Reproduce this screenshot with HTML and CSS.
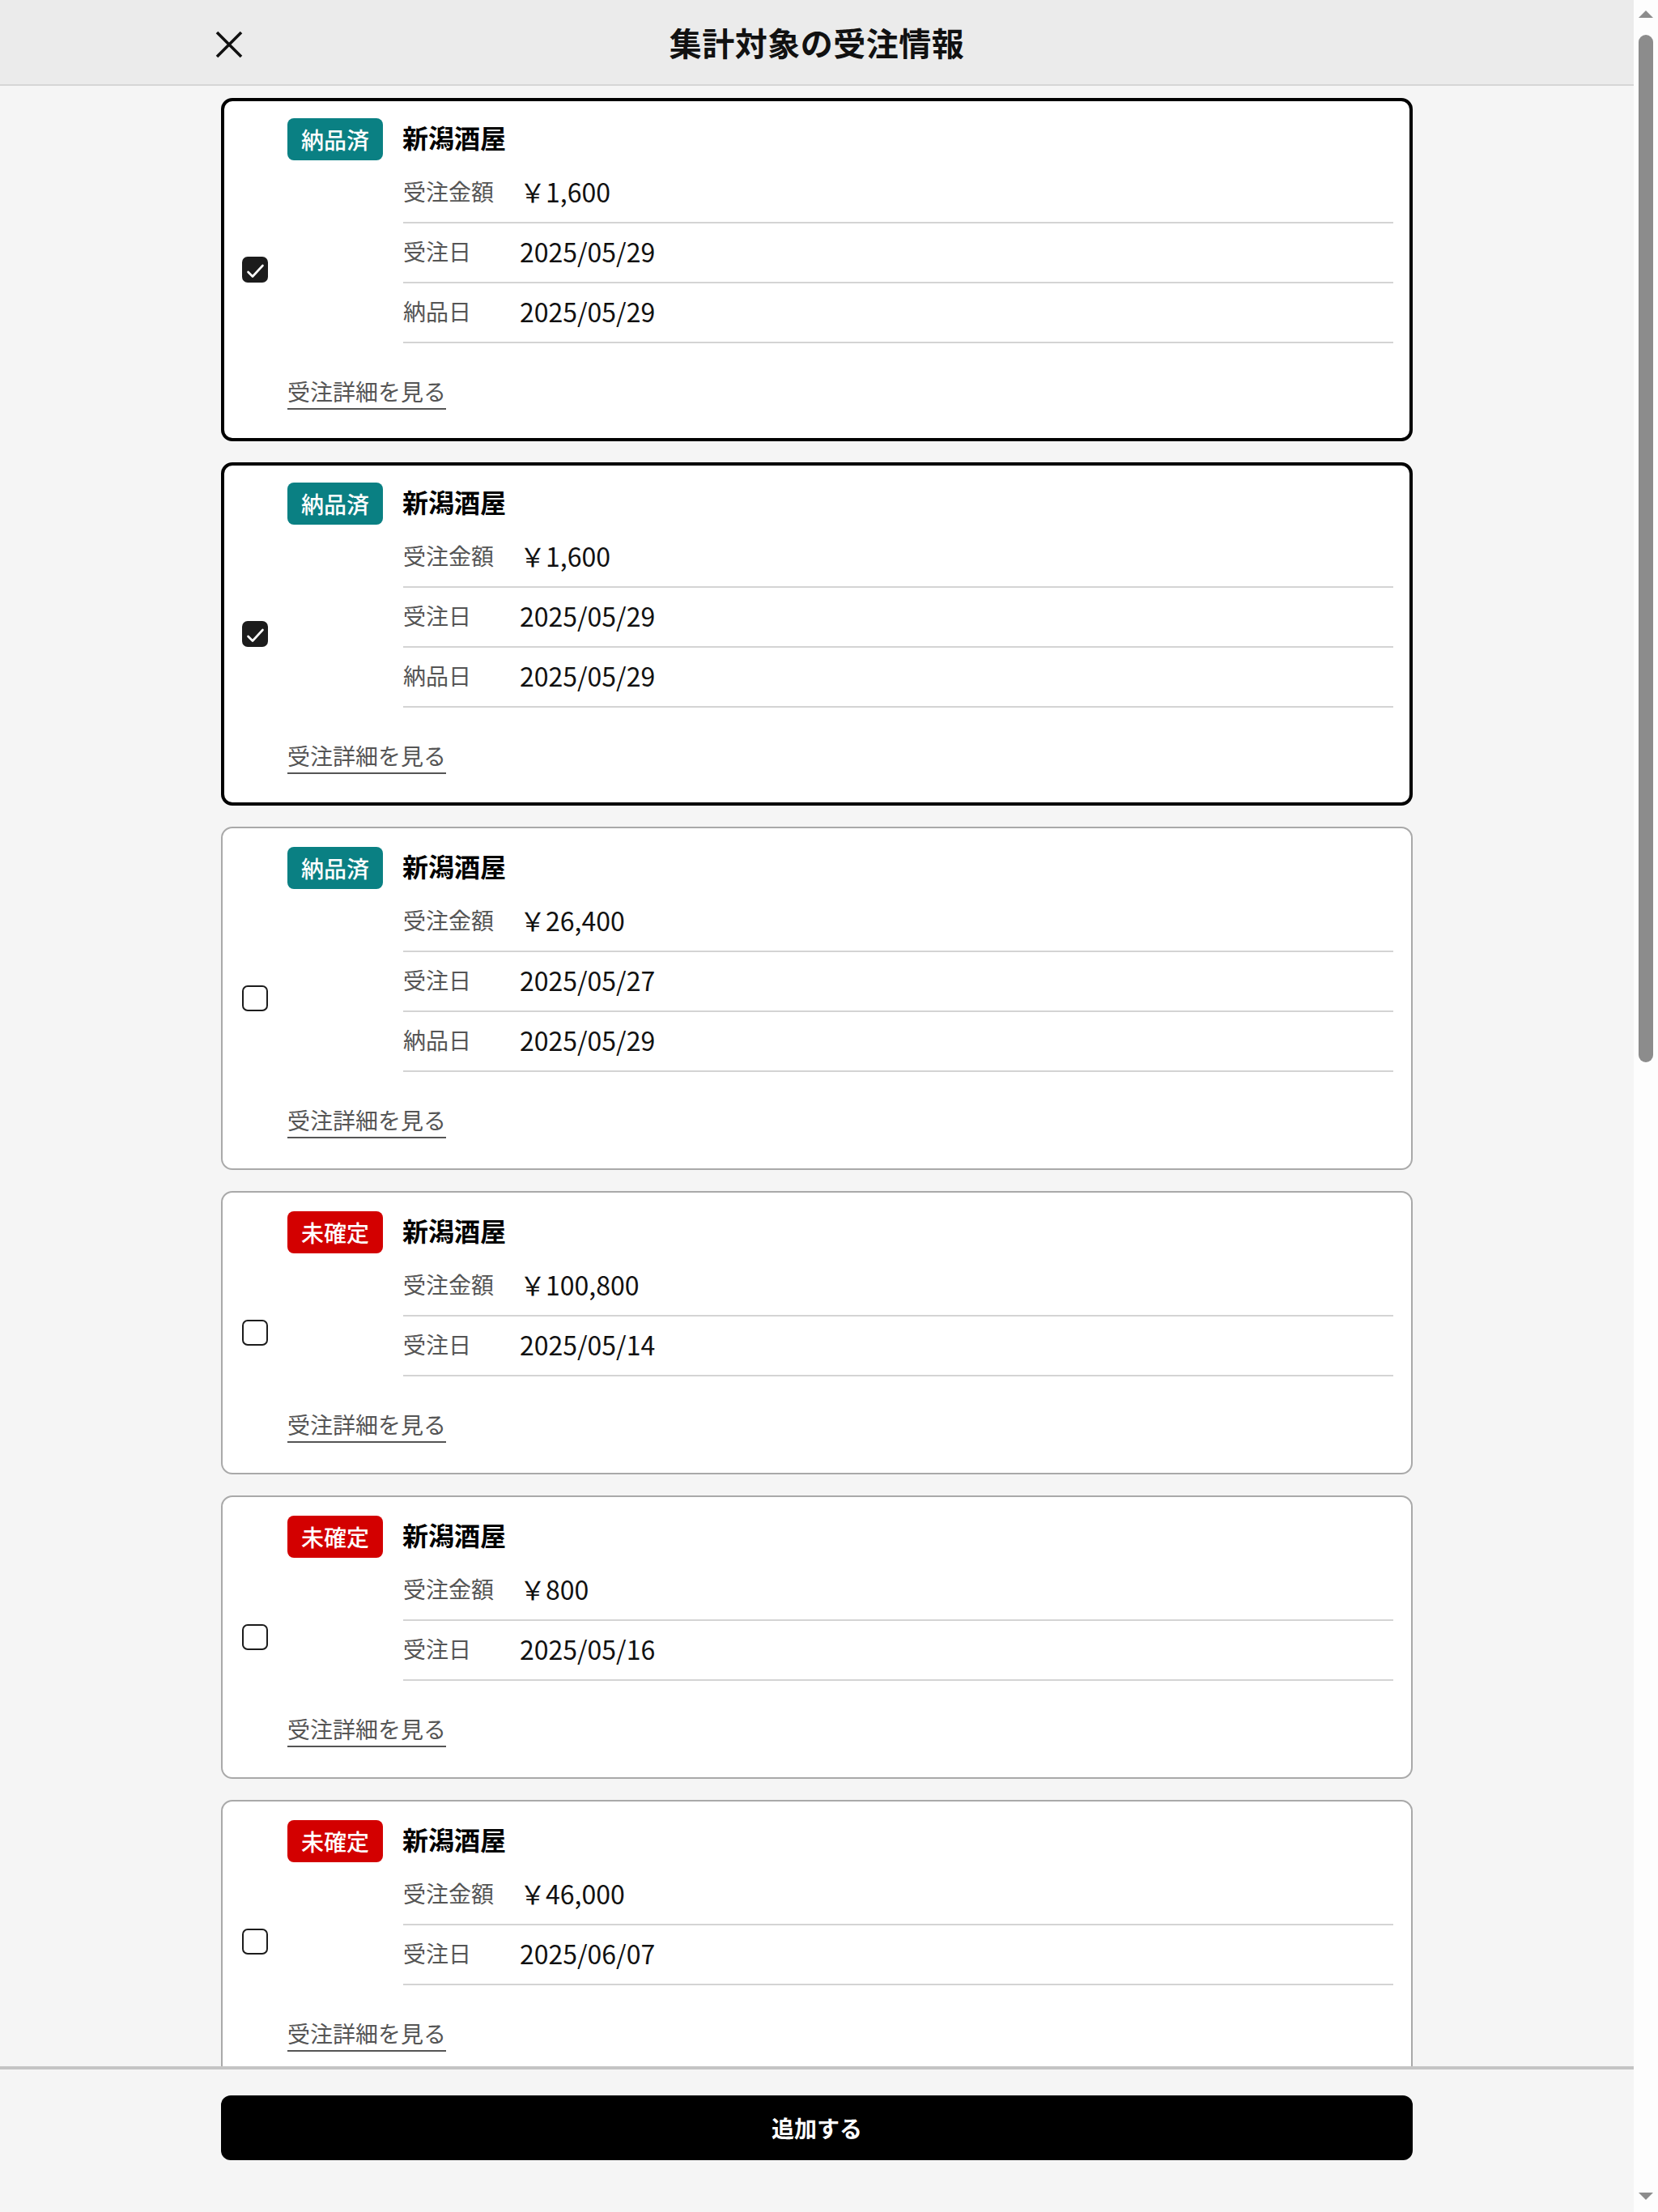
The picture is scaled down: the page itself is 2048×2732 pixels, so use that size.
FILE: index.html
```html
<!DOCTYPE html>
<html lang="ja">
<head>
  <meta charset="UTF-8">
  <meta name="viewport" content="width=device-width, initial-scale=1.0">
  <title>集計対象の受注情報</title>
  <link rel="stylesheet" href="styles.css">
</head>

<body>
  <div class="app">
    <div class="screen">
      <header class="topbar">
        <div class="topbar-inner">
          <button class="close-btn" aria-label="閉じる">
            <svg width="34" height="34" viewBox="0 0 34 34">
              <path d="M2 2 L32 32 M32 2 L2 32" stroke="#111" stroke-width="3.6" fill="none" />
            </svg>
          </button>
          <h1>集計対象の受注情報</h1>
          <span></span>
        </div>
      </header>

      <main class="list" id="list"></main>

      <footer class="bottombar">
        <button class="submit-btn">追加する</button>
      </footer>
    </div>

    <div class="scroll-rail">
      <span class="rail-arrow rail-up"></span>
      <span class="rail-thumb"></span>
      <span class="rail-space"></span>
      <span class="rail-arrow rail-down"></span>
    </div>
  </div>

  <script>
    const list = document.querySelector('#list');

    const orders = [
      { status: 'done', amount: '1,600', ordered: '2025/05/29', delivered: '2025/05/29', checked: true },
      { status: 'done', amount: '1,600', ordered: '2025/05/29', delivered: '2025/05/29', checked: true },
      { status: 'done', amount: '26,400', ordered: '2025/05/27', delivered: '2025/05/29' },
      { status: 'pending', amount: '100,800', ordered: '2025/05/14' },
      { status: 'pending', amount: '800', ordered: '2025/05/16' },
      { status: 'pending', amount: '46,000', ordered: '2025/06/07' }
    ];

    const badges = {
      done: { text: '納品済', cls: 'badge-done' },
      pending: { text: '未確定', cls: 'badge-pending' }
    };

    function row(label, value) {
      return `
        <div class="info-row">
          <span class="info-label">${label}</span>
          <span class="info-value">${value}</span>
        </div>`;
    }

    list.innerHTML = orders.map(o => `
      <div class="card ${o.checked ? 'is-checked' : ''}">
        <label class="check">
          <input type="checkbox" ${o.checked ? 'checked' : ''}>
          <span class="check-box">
            <svg width="32" height="32" viewBox="0 0 32 32">
              <path d="M7.5 19 L13 24.5 L25.5 11" stroke="#fff" stroke-width="2.6" fill="none" stroke-linecap="round" stroke-linejoin="round" />
            </svg>
          </span>
        </label>
        <div class="card-body">
          <div class="card-head">
            <span class="badge ${badges[o.status].cls}">${badges[o.status].text}</span>
            <span class="shop-name">新潟酒屋</span>
          </div>
          <div class="info">
            ${row('受注金額', '￥' + o.amount)}
            ${row('受注日', o.ordered)}
            ${o.delivered ? row('納品日', o.delivered) : ''}
          </div>
          <div class="card-foot">
            <a class="detail-link" href="#">受注詳細を見る</a>
          </div>
        </div>
      </div>
    `).join('');
  </script>
</body>
</html>
```

FILE: styles.css
```css
* {
  box-sizing: border-box;
}

html, body {
  margin: 0;
  padding: 0;
}

body {
  font-family: "Noto Sans CJK JP", "Noto Sans", sans-serif;
  color: #111;
  background: #f5f5f5;
}

.app {
  display: flex;
  height: 100vh;
}

.screen {
  flex: 1;
  min-width: 0;
  overflow-y: auto;
  scrollbar-width: none;
  background: #f5f5f5;
}

/* scrollbar look-alike on the right */
.scroll-rail {
  width: 30px;
  flex-shrink: 0;
  background: #fdfdfd;
  display: flex;
  flex-direction: column;
  align-items: center;
  padding: 13px 0 15px;
}

.rail-arrow {
  width: 0;
  height: 0;
  border-left: 9px solid transparent;
  border-right: 9px solid transparent;
}

.rail-up {
  border-bottom: 9px solid #8c8c8c;
  margin-bottom: 21px;
}

.rail-down {
  border-top: 9px solid #8c8c8c;
}

.rail-thumb {
  width: 18px;
  height: 1269px;
  border-radius: 9px;
  background: #8c8c8c;
}

.rail-space {
  flex: 1;
}

/* header */
.topbar {
  position: sticky;
  top: 0;
  z-index: 2;
  height: 106px;
  background: #ebebeb;
  border-bottom: 2px solid #d6d6d6;
}

.topbar-inner {
  width: 1500px;
  height: 100%;
  margin: 0 auto;
  display: grid;
  grid-template-columns: 1fr auto 1fr;
  align-items: center;
}

.close-btn {
  width: 48px;
  height: 48px;
  margin-top: 6px;
  padding: 0;
  border: none;
  background: none;
  display: flex;
  align-items: center;
  justify-content: center;
  cursor: pointer;
}

.topbar h1 {
  margin: 0;
  font-size: 40px;
  font-weight: 700;
  color: #111;
  letter-spacing: 0.5px;
}

/* list */
.list {
  width: 1472px;
  margin: 0 auto;
  padding: 15px 0 26px;
  display: flex;
  flex-direction: column;
  gap: 26px;
}

.card {
  display: flex;
  align-items: center;
  background: #fff;
  border: 2px solid #a9a9a9;
  border-radius: 14px;
  padding: 0 22px 0 24px;
}

.card.is-checked {
  border: 4px solid #000;
  padding: 0 20px 0 22px;
}

.check input {
  display: none;
}

.check-box {
  display: block;
  width: 32px;
  height: 32px;
  border: 2px solid #1c1c1c;
  border-radius: 7px;
  background: #fff;
}

.check-box svg {
  display: none;
  margin: -2px 0 0 -2px;
}

.check input:checked + .check-box {
  background: #1c1c1c;
}

.check input:checked + .check-box svg {
  display: block;
}

.card-body {
  flex: 1;
  margin-left: 24px;
  padding: 23px 0 37px;
}

.card.is-checked .card-body {
  padding: 21px 0 35px;
}

.card-head {
  display: flex;
  align-items: center;
  gap: 24px;
  height: 52px;
  margin-bottom: 4px;
}

.badge {
  height: 52px;
  line-height: 52px;
  padding: 0 17px;
  border-radius: 8px;
  color: #fff;
  font-size: 28px;
  font-weight: 500;
}

.badge-done {
  background: #0a8083;
}

.badge-pending {
  background: #d30000;
}

.shop-name {
  margin-bottom: 6px;
  font-size: 32px;
  line-height: 38px;
  font-weight: 700;
  color: #000;
}

.info {
  margin-left: 143px;
}

.info-row {
  display: flex;
  align-items: center;
  height: 74px;
  padding-bottom: 4px;
  border-bottom: 2px solid #d4d4d4;
}

.info-label {
  width: 144px;
  font-size: 28px;
  color: #555;
}

.info-value {
  font-size: 32px;
  color: #111;
}

.card-foot {
  display: flex;
  margin-top: 44px;
}

.detail-link {
  font-size: 28px;
  line-height: 30px;
  color: #555;
  text-decoration: none;
  padding-bottom: 6px;
  border-bottom: 2px solid #555;
}

/* footer */
.bottombar {
  position: sticky;
  bottom: 0;
  z-index: 2;
  background: #f5f5f5;
  border-top: 4px solid #c4c4c4;
  padding: 32px 0 64px;
}

.submit-btn {
  display: block;
  width: 1472px;
  height: 80px;
  margin: 0 auto;
  border: none;
  border-radius: 12px;
  background: #000;
  color: #fff;
  font-family: inherit;
  font-size: 28px;
  font-weight: 700;
  cursor: pointer;
}
```
